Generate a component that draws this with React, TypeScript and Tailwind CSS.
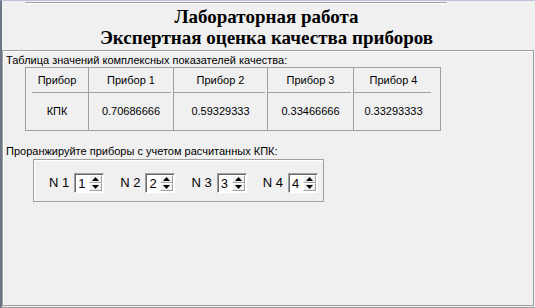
import React from 'react';

const cols = [
  { w: 'w-[63px]', head: 'Прибор', val: 'КПК' },
  { w: 'w-[85px]', head: 'Прибор 1', val: '0.70686666' },
  { w: 'w-[94px]', head: 'Прибор 2', val: '0.59329333' },
  { w: 'w-[86px]', head: 'Прибор 3', val: '0.33466666' },
  { w: 'w-[79px]', head: 'Прибор 4', val: '0.33293333' },
];

function Spin({ value }: { value: string }) {
  return (
    <div className="flex h-[20px] w-[30px] border border-t-[#a0a0a0] border-l-[#a0a0a0] border-r-white border-b-white bg-white shadow-[inset_1px_1px_0_#696969]">
      <span className="flex-1 pl-[3px] pt-[2px] text-[13px] leading-[15px] text-black">{value}</span>
      <div className="flex w-[14px] flex-col pt-[1px] pb-[1px] pr-[1px]">
        <div className="flex flex-1 items-center justify-center bg-[#f0f0f0] border border-t-white border-l-white border-r-[#a0a0a0] border-b-[#a0a0a0]">
          <svg width="7" height="4" viewBox="0 0 7 4">
            <path d="M3.5 0 L7 4 L0 4 Z" fill="#000" />
          </svg>
        </div>
        <div className="flex flex-1 items-center justify-center bg-[#f0f0f0] border border-t-white border-l-white border-r-[#a0a0a0] border-b-[#a0a0a0]">
          <svg width="7" height="4" viewBox="0 0 7 4">
            <path d="M0 0 L7 0 L3.5 4 Z" fill="#000" />
          </svg>
        </div>
      </div>
    </div>
  );
}

export default function App() {
  return (
    <div className="flex h-[308px] w-[535px] flex-col overflow-hidden border-l-2 border-t border-b border-l-[#6b7585] border-t-[#bcc3d8] border-b-[#a0a0a0] bg-[#f0f0f0] font-['Liberation_Sans',sans-serif] text-black">
      {/* header */}
      <div className="h-[49px] shrink-0">
        <div className="ml-[23px] mt-[1px] h-[2px] w-[422px] border-t border-b border-t-[#a0a0a0] border-b-white" />
        <div className="mt-[2px] pr-[4px] text-center font-['Liberation_Serif',serif] text-[19px] font-bold leading-[21px]">
          <div>Лабораторная работа</div>
          <div>Экспертная оценка качества приборов</div>
        </div>
      </div>

      {/* main panel */}
      <div className="mb-[1px] mr-[1px] flex-1 border border-[#a0a0a0] shadow-[inset_1px_1px_0_#fff]">
        <div className="mt-[3px] pl-[3px] text-[11px] leading-[13px]">
          Таблица значений комплексных показателей качества:
        </div>

        <div className="ml-[22px] flex h-[64px] w-[416px] border border-[#a0a0a0] text-[11px]">
          {cols.map((c, i) => (
            <div
              key={c.head}
              className={`${c.w} flex flex-col ${i < cols.length - 1 ? 'border-r border-[#a0a0a0]' : ''}`}
            >
              <div className={`flex h-[25px] items-center justify-center border-b border-[#a0a0a0] ${i === 0 ? 'ml-[6px]' : 'mr-[2px]'}`}>
                <span className={i === 0 ? '-ml-[6px]' : 'ml-[2px]'}>{c.head}</span>
              </div>
              <div className="flex flex-1 items-center justify-center">{c.val}</div>
            </div>
          ))}
        </div>

        <div className="mt-[14px] pl-[3px] text-[11px] leading-[13px]">
          Проранжируйте приборы с учетом расчитанных КПК:
        </div>

        <div className="ml-[30px] mt-[1px] flex h-[43px] w-[291px] items-center border border-[#a0a0a0] pl-[15px] pt-[4px] shadow-[inset_1px_1px_0_#fff]">
          {['1', '2', '3', '4'].map((n, i) => (
            <div key={n} className={`flex items-center ${i > 0 ? 'ml-[16px]' : ''}`}>
              <span className="mr-[5px] text-[13px] leading-[15px]">N {n}</span>
              <Spin value={n} />
            </div>
          ))}
        </div>
      </div>
    </div>
  );
}
